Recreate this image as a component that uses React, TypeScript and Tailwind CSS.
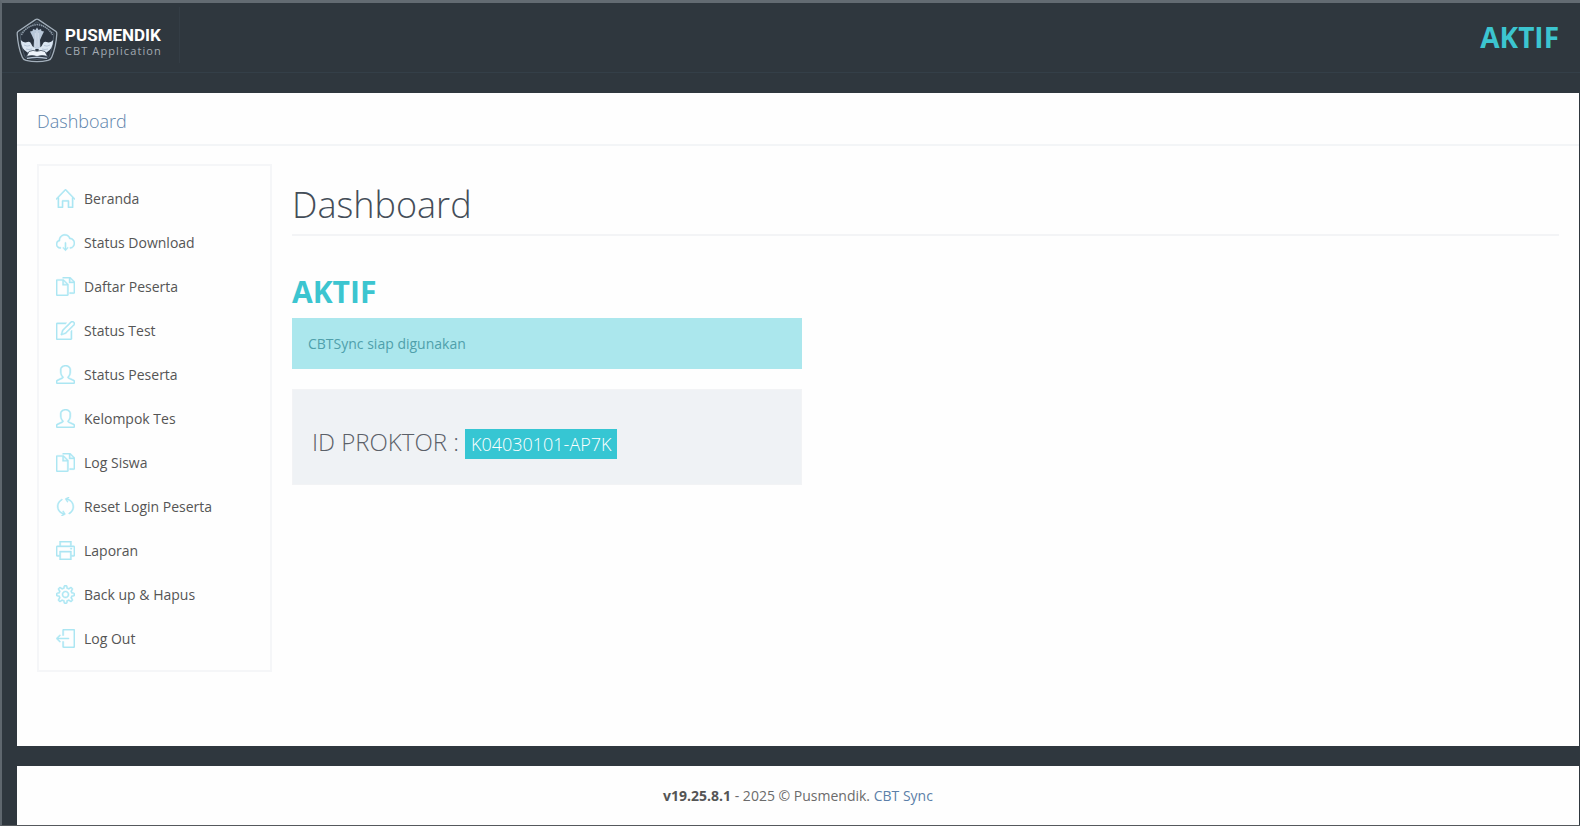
import React from 'react';
import type { IconType } from 'react-icons';
import {
  SlHome,
  SlCloudDownload,
  SlDocs,
  SlNote,
  SlUser,
  SlRefresh,
  SlPrinter,
  SlSettings,
  SlLogout,
} from 'react-icons/sl';

interface MenuItem {
  label: string;
  icon: IconType;
}

const menuItems: MenuItem[] = [
  { label: 'Beranda', icon: SlHome },
  { label: 'Status Download', icon: SlCloudDownload },
  { label: 'Daftar Peserta', icon: SlDocs },
  { label: 'Status Test', icon: SlNote },
  { label: 'Status Peserta', icon: SlUser },
  { label: 'Kelompok Tes', icon: SlUser },
  { label: 'Log Siswa', icon: SlDocs },
  { label: 'Reset Login Peserta', icon: SlRefresh },
  { label: 'Laporan', icon: SlPrinter },
  { label: 'Back up & Hapus', icon: SlSettings },
  { label: 'Log Out', icon: SlLogout },
];

function Emblem() {
  return (
    <svg viewBox="0 0 42 46" className="h-[46px] w-[42px]" aria-hidden="true">
      <path d="M19.5 1.6 Q21 0.8 22.5 1.6 L40 13.5 Q41 14.3 40.8 16 Q40 29 35.8 39 Q35 41.5 32 42.3 Q21 45 10 42.3 Q7 41.5 6.2 39 Q2 29 1.2 16 Q1 14.3 2 13.5 Z" fill="#2c353e" stroke="#a3afbb" strokeWidth="1.3" />
      <path d="M21 3.8 L38 15.3 Q37.5 28 33.5 38 Q32.8 39.8 31 40.3 Q21 42.6 11 40.3 Q9.2 39.8 8.5 38 Q4.5 28 4 15.3 Z" fill="#2b3440" stroke="#566371" strokeWidth="0.8" />
      <path d="M5.5 17 Q10 8 21 6.5 Q32 8 36.5 17" fill="none" stroke="#8d9aa7" strokeWidth="1.5" strokeDasharray="1.4 0.7" />
      {/* torch */}
      <path d="M21 9.5 L22.5 12 L25 11 L25.5 13 L28 13.5 L26 17.5 L24 22 L24.5 31 H17.5 L18 22 L16 17.5 L14 13.5 L16.5 13 L17 11 L19.5 12 Z" fill="#b8c7d9" />
      <path d="M19.3 15 V29 M21 13 V30 M22.7 15 V29" stroke="#dfe8f2" strokeWidth="0.6" />
      {/* wings */}
      <path d="M4.8 22 Q7.5 25.5 11.5 24 Q14 22.8 15.3 26 Q16.5 29.5 19.5 30 L19 34.5 H11.5 Q5 31 4.8 22 Z" fill="#dbe6f2" />
      <path d="M37.2 22 Q34.5 25.5 30.5 24 Q28 22.8 26.7 26 Q25.5 29.5 22.5 30 L23 34.5 H30.5 Q37 31 37.2 22 Z" fill="#dbe6f2" />
      <path d="M8 27 Q11 29 14 27.5 M10 31 Q13 32 16 31 M34 27 Q31 29 28 27.5 M32 31 Q29 32 26 31" fill="none" stroke="#a5b6ca" strokeWidth="0.7" />
      {/* book */}
      <path d="M13 33.5 Q17 31.5 21 33.3 Q25 31.5 29 33.5 L31.5 38.5 Q26 36.5 21 38.5 Q16 36.5 10.5 38.5 Z" fill="#eef4fb" stroke="#465463" strokeWidth="0.8" />
      <path d="M11 40.3 Q21 38.3 31 40.3" fill="none" stroke="#b5c3d3" strokeWidth="1.2" />
    </svg>
  );
}

function Header() {
  return (
    <header className="flex h-[70px] items-start justify-between border-b border-[#343f48] pr-[21px]">
      <a href="#" className="mt-1 flex h-14 items-center gap-[7px] border-r border-[#343d45] pl-[14px] pr-[17px] pt-3">
        <Emblem />
        <span className="flex flex-col">
          <span className="font-['Roboto'] text-[17px] font-bold leading-[19px] text-white">PUSMENDIK</span>
          <span className="text-[11px] leading-3 tracking-widest text-[#a3abb3]">CBT Application</span>
        </span>
      </a>
      <div className="pt-[14px] text-[28px] font-bold leading-10 text-[#3cc5d0]">AKTIF</div>
    </header>
  );
}

function Sidebar() {
  return (
    <nav className="w-[235px] shrink-0 self-start border-2 border-[#f5f6f8] pt-[11px] pb-[9px]">
      <ul>
        {menuItems.map(item => (
          <li key={item.label}>
            <a href="#" className="flex h-11 items-center gap-[9px] px-[17px] text-sm text-[#555555]">
              <item.icon className="mb-[2px] size-[19px] text-[#ace7f3] [stroke-width:24]" />
              {item.label}
            </a>
          </li>
        ))}
      </ul>
    </nav>
  );
}

export default function App() {
  return (
    <div className="flex min-h-screen flex-col border-b border-l-2 border-t-[3px] border-b-[#55595d] border-l-[#5f676e] border-t-[#636b72] bg-[#2f373e] font-['Open_Sans',sans-serif]">
      <Header />

      <div className="ml-[15px] mr-px mt-5 flex flex-1 flex-col bg-[#fefefe]">
        <div className="border-b-2 border-[#f3f5f7] px-5 pt-4 pb-[10px]">
          <a href="#" className="text-lg font-light leading-6 text-[#5c83ab]">Dashboard</a>
        </div>

        <div className="flex flex-1 gap-5 p-5 pt-[18px]">
          <Sidebar />

          <main className="min-w-0 flex-1">
            <h1 className="mt-[21px] border-b-2 border-[#f3f4f6] pb-[9px] text-4xl font-light leading-10 text-[#444d58]">Dashboard</h1>

            <section className="mt-9 w-[510px]">
              <h2 className="text-3xl font-bold leading-10 text-[#3cc5d0]">AKTIF</h2>
              <div className="mt-[6px] bg-[#abe7ed] px-4 pt-4 pb-[15px] text-sm leading-5 text-[#4fa0ab]">CBTSync siap digunakan</div>

              <div className="mt-5 flex h-24 items-center gap-[6px] border border-[#f2f3f5] bg-[#eff2f5] px-[19px] pt-[10px]">
                <span className="text-2xl font-light text-[#5b6068]">ID PROKTOR :</span>
                <span className="mt-1 bg-[#36c6d3] px-[6px] py-px text-lg font-light leading-7 text-white">K04030101-AP7K</span>
              </div>
            </section>
          </main>
        </div>
      </div>

      <footer className="ml-[15px] mr-px mt-5 bg-[#fefefe] py-5 text-center text-sm leading-[19px] text-[#6b6b6b]">
        <strong className="font-bold text-[#555555]">v19.25.8.1</strong> - 2025 © Pusmendik.{' '}
        <a href="#" className="text-[#5b7fa8]">CBT Sync</a>
      </footer>
    </div>
  );
}
